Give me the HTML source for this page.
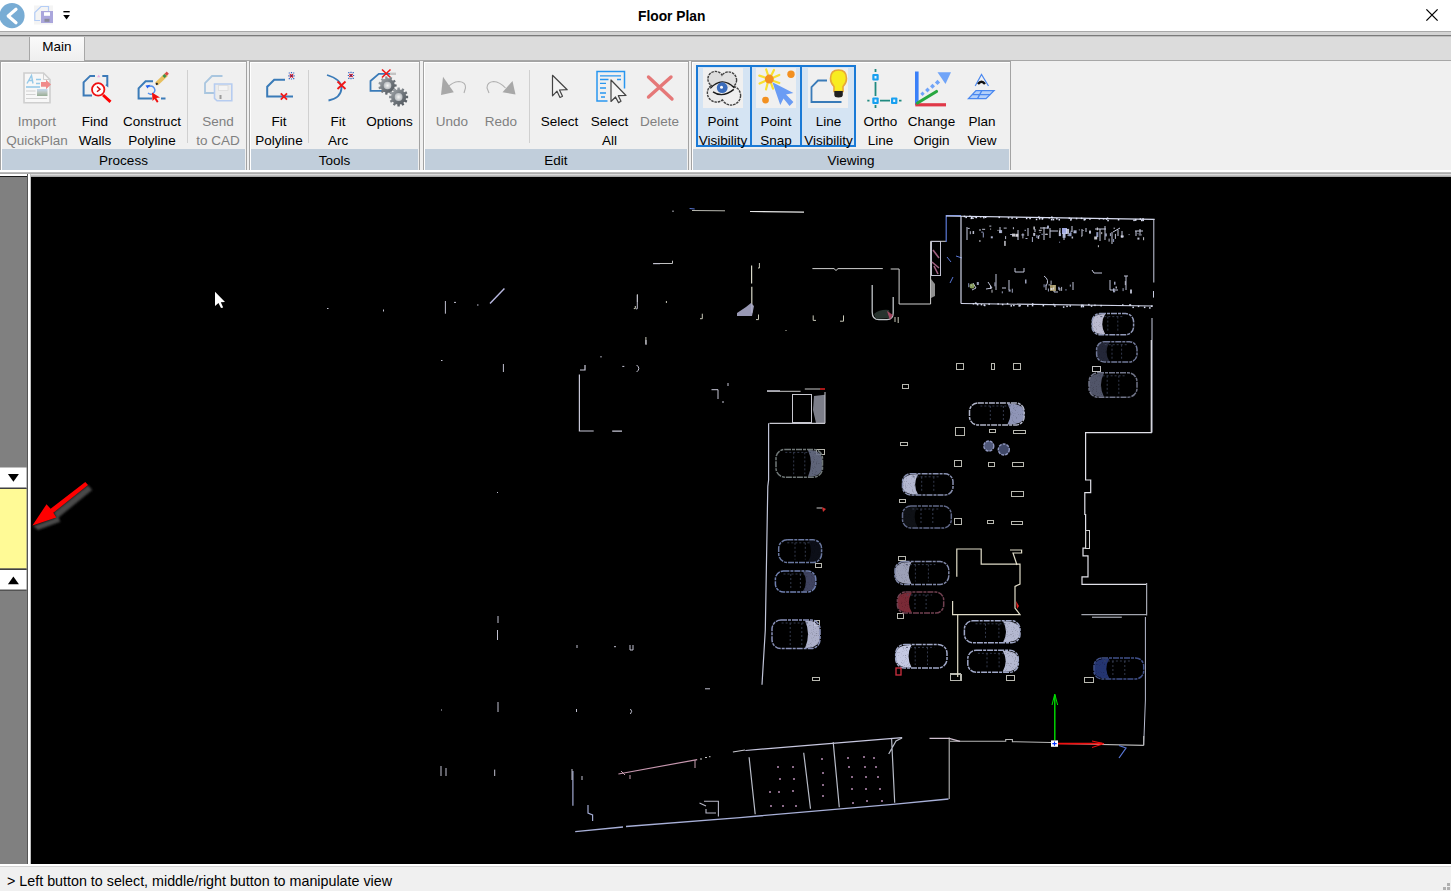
<!DOCTYPE html>
<html><head><meta charset="utf-8">
<style>
*{margin:0;padding:0;box-sizing:border-box}
html,body{width:1451px;height:891px;overflow:hidden;background:#f0f0f0;font-family:"Liberation Sans",sans-serif;position:relative}
.abs{position:absolute}
#title{left:0;top:0;width:1451px;height:31px;background:#fff}
#ttl{left:638px;top:9px;font-weight:bold;font-size:13.8px;color:#000;white-space:nowrap}
#sep1{left:0;top:31px;width:1451px;height:6px;background:linear-gradient(#a9a9a9 0,#a9a9a9 1px,#d4d4d4 1px,#d4d4d4 4px,#7a7a7a 4px,#7a7a7a 5px,#bdbdbd 5px)}
#tabs{left:0;top:37px;width:1451px;height:24px;background:#dcdcdc;border-bottom:1px solid #a7a7a7}
#tabmain{left:29px;top:37px;width:56px;height:25px;background:linear-gradient(#fafafa,#eeeeee);border-left:1px solid #a7a7a7;border-right:1px solid #a7a7a7;font-size:13.5px;text-align:center;line-height:19px;color:#000}
#ribbon{left:0;top:61px;width:1451px;height:111px;background:#f0f0f0}
.grp{position:absolute;top:61px;height:110px;border:1px solid #a3a3a3;box-shadow:inset 1px 1px 0 #fff}
.band{position:absolute;left:1px;right:1px;bottom:0px;height:21px;background:#c1cedb;font-size:13.5px;text-align:center;line-height:24px;color:#000}
.l{position:absolute;width:120px;margin-left:-60px;text-align:center;font-size:13.5px;line-height:19px;white-space:nowrap;color:#000;top:112px}
.d{color:#808080}
.vsep{position:absolute;top:70px;width:1px;height:73px;background:#d0d0d0}
.hl{position:absolute;top:66px;height:80px;background:#d5e4f3;border:1px solid #1a7ad6}
.hlo{position:absolute;top:65px;left:696px;width:160px;height:82px;border:1px solid #1a7ad6}
#sep2{left:0;top:170px;width:1451px;height:7px;background:linear-gradient(#fff 0,#fff 2px,#c4c4c4 2px,#a4a4a4 4px,#e8e8e8 4px,#9a9a9a 7px)}
#leftp{left:0;top:174px;width:28px;height:690px;background:linear-gradient(#fff 0,#fff 2px,#1a1a1a 2px,#1a1a1a 3px,#808080 3px);border-right:1px solid #555}
#vp{left:31px;top:177px;width:1420px;height:687px;background:#000}
#wline{left:28px;top:174px;width:3px;height:690px;background:linear-gradient(90deg,#fff,#fff 1.5px,#a0a0a0 3px)}
#status{left:0;top:864px;width:1451px;height:27px;background:#f0f0f0;font-size:14.3px;line-height:27px;padding-left:7px;color:#000;padding-top:4px;white-space:nowrap;background:linear-gradient(#fff 0,#fff 2px,#d4d4d4 2px,#d4d4d4 3px,#f0f0f0 3px)}
svg{position:absolute;left:0;top:0;overflow:visible}
</style></head><body>
<div id="title" class="abs"></div>
<div id="ttl" class="abs">Floor Plan</div>
<div id="sep1" class="abs"></div>
<div id="tabs" class="abs"></div>
<div id="tabmain" class="abs">Main</div>
<div id="ribbon" class="abs"></div>

<div class="grp" style="left:0;width:247px"><div class="band">Process</div></div>
<div class="grp" style="left:249px;width:171px"><div class="band">Tools</div></div>
<div class="grp" style="left:423px;width:266px"><div class="band">Edit</div></div>
<div class="grp" style="left:691px;width:320px"><div class="band">Viewing</div></div>

<div class="vsep" style="left:187px"></div>
<div class="vsep" style="left:308px"></div>
<div class="vsep" style="left:529px"></div>

<div class="hlo"></div>
<div class="hl" style="left:697px;width:54px"></div>
<div class="hl" style="left:751px;width:50px"></div>
<div class="hl" style="left:801px;width:54px"></div>

<div class="l d" style="left:37px">Import<br>QuickPlan</div>
<div class="l" style="left:95px">Find<br>Walls</div>
<div class="l" style="left:152px">Construct<br>Polyline</div>
<div class="l d" style="left:218px">Send<br>to CAD</div>
<div class="l" style="left:279px">Fit<br>Polyline</div>
<div class="l" style="left:338px">Fit<br>Arc</div>
<div class="l" style="left:389.5px">Options</div>
<div class="l d" style="left:452px">Undo</div>
<div class="l d" style="left:501px">Redo</div>
<div class="l" style="left:559.5px">Select</div>
<div class="l" style="left:609.5px">Select<br>All</div>
<div class="l d" style="left:659.5px">Delete</div>
<div class="l" style="left:723px">Point<br>Visibility</div>
<div class="l" style="left:776px">Point<br>Snap</div>
<div class="l" style="left:828.5px">Line<br>Visibility</div>
<div class="l" style="left:880.5px">Ortho<br>Line</div>
<div class="l" style="left:931.5px">Change<br>Origin</div>
<div class="l" style="left:982px">Plan<br>View</div>

<div id="sep2" class="abs"></div>
<div id="leftp" class="abs"></div>
<div id="wline" class="abs"></div>
<div id="vp" class="abs"></div>
<div id="status" class="abs">&gt; Left button to select, middle/right button to manipulate view</div>
<div class="abs" style="left:1447px;top:883px;width:3px;height:3px;background:#b0b0b0"></div><div class="abs" style="left:1443px;top:887px;width:3px;height:3px;background:#b0b0b0"></div><div class="abs" style="left:1447px;top:887px;width:3px;height:3px;background:#b0b0b0"></div>
<svg width="1451" height="180" viewBox="0 0 1451 180">
<!-- back button -->
<circle cx="12" cy="15.7" r="12.6" fill="#78acd4"/>
<path d="M16 9.2 L8.2 16 L16 22.8" fill="none" stroke="#fff" stroke-width="3.2" stroke-linecap="round" stroke-linejoin="round"/>
<!-- save -->
<rect x="34" y="5.5" width="19" height="19" fill="#f4f4f4"/>
<path d="M48.5 11 V6.5 H41 L34.8 12.5 V20.5 H40" fill="none" stroke="#b4cdf6" stroke-width="1.2"/>
<rect x="41" y="11" width="12" height="12" fill="#aaa6dc"/>
<rect x="44" y="12.2" width="6" height="3.6" fill="#fff"/>
<rect x="44.5" y="18.8" width="5" height="3" fill="#8a8a9a"/>
<!-- dropdown -->
<rect x="63.4" y="11" width="6.3" height="1.4" fill="#000"/>
<path d="M63.2 15 H69.9 L66.55 19.5 Z" fill="#000"/>
<!-- close -->
<path d="M1426.4 9.4 L1437.6 20.6 M1437.6 9.4 L1426.4 20.6" stroke="#000" stroke-width="1.3"/>

<!-- Import QuickPlan -->
<g opacity="0.75">
<path d="M24 73 H43.5 L50 79.5 V102.7 H24 Z" fill="#fafafa" stroke="#c4c4c4" stroke-width="1.6"/>
<path d="M43.5 73 V79.5 H50" fill="none" stroke="#c4c4c4" stroke-width="1"/>
<path d="M27 83.5 L31.5 75.5 L33 83.5 M28.5 80.5 H32.5" fill="none" stroke="#78bce6" stroke-width="1.4"/>
<path d="M36 79.5 H41 M36 83.5 H40" stroke="#78bce6" stroke-width="1.3"/>
<path d="M26 87 H40" stroke="#78bce6" stroke-width="1.6"/>
<path d="M41 82 H46 V79.8 L51 84.5 L46 89.3 V86.8 H41 Z" fill="#f06868"/>
<path d="M26 91 H35.5 M26 94.5 H35.5 M26 98.5 H47" stroke="#c8c8c8" stroke-width="1.2"/>
<defs><linearGradient id="pic" x1="0" y1="0" x2="0" y2="1"><stop offset="0" stop-color="#b8d0f0"/><stop offset="0.5" stop-color="#a8b8b0"/><stop offset="1" stop-color="#7a9878"/></linearGradient></defs><rect x="37" y="89" width="10.5" height="7" fill="url(#pic)"/>
</g>
<!-- Find Walls -->
<path d="M95 75.9 H90.2 L83.6 82.4 V95.6 H92" fill="none" stroke="#3c7ab8" stroke-width="2"/>
<path d="M102.3 75.9 H107.3 V85.5 L106 84.5" fill="none" stroke="#3c7ab8" stroke-width="2"/>
<path d="M97 77.3 L98.7 74.8 L100.4 77.3 Z" fill="#f0a8e0"/>
<circle cx="98.2" cy="89.4" r="6.2" fill="#fff" stroke="#f01010" stroke-width="1.8"/>
<path d="M97 86.5 L100 89.2 L97 91.8" fill="none" stroke="#d01010" stroke-width="1.5"/>
<path d="M103 95 L110.5 101.8" stroke="#f00" stroke-width="3"/>
<!-- Construct Polyline -->
<path d="M153 81.3 H145.6 L138.6 88.3 V98.5 H152" fill="none" stroke="#3a7bb8" stroke-width="2"/>
<path d="M161 98.5 H165.5" stroke="#3a7bb8" stroke-width="2"/>
<path d="M149 86.5 A4 4 0 1 1 148 93" fill="none" stroke="#5090f0" stroke-width="1.4"/>
<path d="M145.5 85.5 L150.5 84.8 L147.5 88.5 Z" fill="#2060f0"/>
<path d="M152 92.5 L152.5 101 L154.5 99 L157 102.7 L158.5 101.5 L156.3 98 L160 97.5 Z" fill="#f01010"/>
<path d="M156.5 84 L166.5 74.5" stroke="#e8c060" stroke-width="4"/>
<path d="M163.5 77 L165.5 75" stroke="#3a9050" stroke-width="3"/>
<path d="M165.7 74.8 L167.8 72.6" stroke="#d84848" stroke-width="3"/>
<path d="M156 84.6 L157.6 83.2" stroke="#202020" stroke-width="2"/>
<!-- Send to CAD -->
<g opacity="0.8">
<path d="M222.5 76 H212 L205 83 V93 H215" fill="none" stroke="#98bcdc" stroke-width="1.8"/>
<path d="M214.5 84 H231.8 V100.8 H217 L214.5 98.3 Z" fill="#ececec" stroke="#a8c4f0" stroke-width="1.6"/>
<rect x="218.5" y="85.5" width="9.5" height="5" fill="#f6f6f6" stroke="#d8d8d8" stroke-width="0.8"/>
<rect x="219.5" y="95" width="2" height="4" fill="#888"/>
</g>
<!-- Fit Polyline -->
<path d="M285 79.7 H274.2 L267.2 86.7 V96.6 H293" fill="none" stroke="#3a7bb8" stroke-width="2"/>
<path d="M280.8 93.3 L287 99.6 M287 93.3 L280.8 99.6" stroke="#f01818" stroke-width="1.8"/>
<path d="M288.7 73.0 h1.2 M290.9 72.6 h1.2 M293.1 73.0 h1.2 M288.3 75.8 h1.2 M293.5 75.8 h1.2 M288.7 78.6 h1.2 M290.9 79.0 h1.2 M293.1 78.6 h1.2" stroke="#3060c0" stroke-width="1.2"/>
<path d="M289.9 74.2 L293.1 77.39999999999999 M293.1 74.2 L289.9 77.39999999999999" stroke="#d82030" stroke-width="1.4"/>
<circle cx="291.5" cy="75.8" r="1" fill="#602060"/>
<!-- Fit Arc -->
<path d="M327 75 Q341 79 341.5 88 Q341 98 328.5 100.5" fill="none" stroke="#3a7bb8" stroke-width="1.8"/>
<path d="M337.5 81.5 L345.5 89 M345.5 81.5 L337.5 89" stroke="#f01818" stroke-width="1.8"/>
<path d="M348.2 72.7 h1.2 M350.4 72.3 h1.2 M352.6 72.7 h1.2 M347.8 75.5 h1.2 M353 75.5 h1.2 M348.2 78.3 h1.2 M350.4 78.7 h1.2 M352.6 78.3 h1.2" stroke="#3060c0" stroke-width="1.2"/>
<path d="M349.4 73.9 L352.6 77.1 M352.6 73.9 L349.4 77.1" stroke="#d82030" stroke-width="1.4"/>
<circle cx="351" cy="75.5" r="1" fill="#602060"/>
<!-- Options -->
<path d="M391 73.8 H378.8 L370.5 81 V90.8 H386" fill="none" stroke="#3a7bb8" stroke-width="1.8"/>
<path d="M390 73.8 H396" stroke="#c4c4c4" stroke-width="2.4"/>
<path d="M382 69.5 L390.5 77.5 M390.5 69.5 L382 77.5" stroke="#f01818" stroke-width="1.6"/>
<defs><linearGradient id="gg" x1="0" y1="0" x2="1" y2="1"><stop offset="0" stop-color="#b0b4b8"/><stop offset="0.5" stop-color="#70767c"/><stop offset="1" stop-color="#4a5056"/></linearGradient>
<radialGradient id="gh"><stop offset="0" stop-color="#f4f4f4"/><stop offset="1" stop-color="#b8bcc0"/></radialGradient></defs>
<path d="M394.60 84.28 L396.63 84.40 L396.63 86.60 L394.60 86.72 L394.41 87.53 L394.13 88.31 L395.78 89.51 L394.59 91.36 L392.81 90.36 L392.21 90.94 L391.56 91.45 L392.30 93.35 L390.29 94.27 L389.34 92.46 L388.52 92.63 L387.70 92.70 L387.29 94.70 L385.11 94.38 L385.28 92.35 L384.51 92.05 L383.77 91.66 L382.35 93.12 L380.69 91.68 L381.93 90.07 L381.44 89.39 L381.03 88.67 L379.05 89.13 L378.43 87.02 L380.35 86.33 L380.30 85.50 L380.35 84.67 L378.43 83.98 L379.05 81.87 L381.03 82.33 L381.44 81.61 L381.93 80.93 L380.69 79.32 L382.35 77.88 L383.77 79.34 L384.51 78.95 L385.28 78.65 L385.11 76.62 L387.29 76.30 L387.70 78.30 L388.52 78.37 L389.34 78.54 L390.29 76.73 L392.30 77.65 L391.56 79.55 L392.21 80.06 L392.81 80.64 L394.59 79.64 L395.78 81.49 L394.13 82.69 L394.41 83.47 Z" fill="url(#gg)"/>
<circle cx="387.5" cy="85.5" r="3.8" fill="url(#gh)"/>
<path d="M405.99 95.73 L408.13 95.85 L408.13 98.15 L405.99 98.27 L405.84 98.94 L405.64 99.60 L407.43 100.77 L406.28 102.76 L404.37 101.79 L403.90 102.30 L403.39 102.77 L404.36 104.68 L402.37 105.83 L401.20 104.04 L400.54 104.24 L399.87 104.39 L399.75 106.53 L397.45 106.53 L397.33 104.39 L396.66 104.24 L396.00 104.04 L394.83 105.83 L392.84 104.68 L393.81 102.77 L393.30 102.30 L392.83 101.79 L390.92 102.76 L389.77 100.77 L391.56 99.60 L391.36 98.94 L391.21 98.27 L389.07 98.15 L389.07 95.85 L391.21 95.73 L391.36 95.06 L391.56 94.40 L389.77 93.23 L390.92 91.24 L392.83 92.21 L393.30 91.70 L393.81 91.23 L392.84 89.32 L394.83 88.17 L396.00 89.96 L396.66 89.76 L397.33 89.61 L397.45 87.47 L399.75 87.47 L399.87 89.61 L400.54 89.76 L401.20 89.96 L402.37 88.17 L404.36 89.32 L403.39 91.23 L403.90 91.70 L404.37 92.21 L406.28 91.24 L407.43 93.23 L405.64 94.40 L405.84 95.06 Z" fill="url(#gg)"/>
<circle cx="398.6" cy="97" r="3.9" fill="url(#gh)"/>
<!-- Undo -->
<path d="M447 88 Q452 82 459 81.5 Q466 82 465.5 88 L464 93" fill="none" stroke="#b0b0b0" stroke-width="1.1"/>
<path d="M443 76.8 L441 95 L453.8 92.3 Z" fill="#a8a8a8"/>
<!-- Redo -->
<path d="M505.5 88 Q500 82 493.5 81.5 Q487 82 487 88 L489 93" fill="none" stroke="#b0b0b0" stroke-width="1.1"/>
<path d="M512.5 81 L515.5 94.5 L502.5 92.3 Z" fill="#a8a8a8"/>
<!-- Select -->
<path d="M552.5 75.3 V95.8 L557 91.2 L560 97.5 L562.5 96.2 L559.5 90 L567.2 89.7 Z" fill="#f4f4f4" stroke="#444" stroke-width="1.2" stroke-linejoin="round"/>
<!-- Select All -->
<path d="M607.5 101 H597 V71.6 H624.5 V88.5" fill="none" stroke="#2896f0" stroke-width="1.5"/>
<path d="M600 75.8 H621 M600 79.5 H608.5 M617 79.5 H621 M600 83.3 H606 M600 88 H606 M600 93 H606 M601 97 H605" stroke="#2896f0" stroke-width="1.3"/>
<path d="M611 80 V101.5 L615.5 97 L618.5 102.6 L621 101.3 L618.3 95.7 L626 95.5 Z" fill="#f4f4f4" stroke="#444" stroke-width="1.2" stroke-linejoin="round"/>
<!-- Delete -->
<path d="M648.5 77 L672 99 M671 77 L648.5 97" stroke="#e57878" stroke-width="3.4" stroke-linecap="round"/>
<!-- Point Visibility -->
<rect x="703" y="68" width="40" height="40" fill="#f0f0f0"/>
<g stroke="#404040" stroke-width="2.6" stroke-dasharray="2.4 0.8">
<circle cx="715.5" cy="79" r="7" fill="#dcdcdc"/>
<circle cx="728.5" cy="80" r="7.5" fill="#e0e0e0"/>
<circle cx="716.5" cy="93" r="8.5" fill="#ececec"/>
<circle cx="731" cy="95.5" r="9" fill="#eeeeee"/>
</g>
<circle cx="715.5" cy="79" r="7" fill="#dcdcdc"/>
<circle cx="728.5" cy="80" r="7.5" fill="#e0e0e0"/>
<circle cx="716.5" cy="93" r="8.5" fill="#eaeaea"/>
<circle cx="731" cy="95.5" r="9" fill="#efefef"/>
<path d="M710.3 88.4 Q722 75.5 734.5 88" fill="none" stroke="#1a1a1a" stroke-width="1.4"/>
<path d="M713 91.8 Q722.7 98.5 733.8 89.4" fill="none" stroke="#1a1a1a" stroke-width="1.4"/>
<circle cx="722.2" cy="87.7" r="5.4" fill="#3a6cbc"/>
<circle cx="721.5" cy="87.3" r="1.5" fill="#fff"/>
<!-- Point Snap -->
<rect x="756" y="68" width="40" height="40" fill="#f0f0f0"/>
<path d="M766.2 69.5 L768 75 M774 70 L771.5 75 M779.3 75 L773.5 77.5 M779.3 83 L773.5 81 M773 88.7 L771 83 M766 89.4 L767.5 83.5 M759.6 83.6 L765 81 M759.3 75.6 L765 77.5" stroke="#f8e030" stroke-width="2.2" stroke-linecap="round"/>
<circle cx="769.3" cy="79.1" r="4.5" fill="#f39020"/>
<circle cx="791" cy="74.3" r="3.7" fill="#f39020"/>
<circle cx="765.5" cy="100.1" r="3.4" fill="#f39020"/>
<path d="M772.4 82.2 L793.4 92.9 L786 94.5 L793.4 102 L789.6 106 L783.5 98.5 L780.3 105 Z" fill="#6a9cf4"/>
<!-- Line Visibility -->
<rect x="808" y="68" width="40" height="40" fill="#f0f0f0"/>
<path d="M827 80.5 H818 L811.5 87 V102 H841.5" fill="none" stroke="#3a7bb8" stroke-width="1.8"/>
<path d="M838.5 70 Q830.5 70 830.5 78.5 Q830.5 83 834 86.5 V91.5 H843 V86.5 Q846.5 83 846.5 78.5 Q846.5 70 838.5 70 Z" fill="#f8ec20" stroke="#e8a838" stroke-width="1.6"/>
<path d="M834.3 91 H842.8 V95 Q842.8 97.5 838.5 97.5 Q834.3 97.5 834.3 95 Z" fill="#202020"/>
<!-- Ortho Line -->
<path d="M875.5 69 V72 M875.5 82 V96 M875.5 105 V108 M867.3 100.7 H869.5 M880 100.7 H890 M899 100.7 H901.5" stroke="#208a80" stroke-width="1.8"/>
<rect x="872.3" y="74" width="6.4" height="6.4" rx="1" fill="#18a0f0"/>
<rect x="872.3" y="97.5" width="6.4" height="6.4" rx="1" fill="#18a0f0"/>
<rect x="891" y="97.5" width="6.4" height="6.4" rx="1" fill="#18a0f0"/>
<rect x="874.5" y="76" width="2" height="2.5" fill="#e8f4ff"/>
<rect x="874.5" y="99.5" width="2" height="2.5" fill="#e8f4ff"/>
<rect x="893.2" y="99.5" width="2" height="2.5" fill="#e8f4ff"/>
<!-- Change Origin -->
<rect x="915" y="71.5" width="3.6" height="33.5" fill="#3a80f8"/>
<rect x="915.3" y="103.2" width="30.7" height="3.2" fill="#e03848"/>
<path d="M917.5 103 L936.5 91.5" stroke="#28a840" stroke-width="3.2" stroke-linecap="round"/>
<path d="M922.5 91.5 l2.2 2.2 l-2.2 2.2 l-2.2 -2.2 Z M927.5 87.6 l2.4 2.4 l-2.4 2.4 l-2.4 -2.4 Z M932.5 83.8 l2.5 2.5 l-2.5 2.5 l-2.5 -2.5 Z M937.5 79.8 l2.6 2.6 l-2.6 2.6 l-2.6 -2.6 Z" fill="#70a4f8"/>
<path d="M937.5 72.3 H951 L945.5 84 Z" fill="#70a4f8"/>
<!-- Plan View -->
<path d="M975.2 86 L981.5 74.5 L988.5 86" fill="none" stroke="#4a88f0" stroke-width="1.2"/>
<path d="M978 84 Q981.5 79.5 985 84" fill="none" stroke="#101010" stroke-width="2.4"/>
<path d="M976 90.6 H994 L986 98.6 H968.5 Z" fill="#b4d0fa" stroke="#4a88f0" stroke-width="1.3"/>
<path d="M981.8 90.6 L977.5 98.6 M972.5 94.6 H990.2" stroke="#4a88f0" stroke-width="1.3"/>
</svg>
<svg width="1451" height="891" viewBox="0 0 1451 891" style="position:absolute;left:0;top:0">
<rect x="0" y="467.5" width="26.5" height="20.5" fill="#fff"/>
<path d="M7.9 474 H18.9 L13.4 481.8 Z" fill="#000"/>
<rect x="0" y="487.5" width="26.5" height="1.5" fill="#404040"/>
<rect x="0" y="489" width="26.5" height="79.5" fill="#fffa96"/>
<rect x="0" y="568.5" width="26.5" height="1.5" fill="#404040"/>
<rect x="0" y="570" width="26.5" height="19.7" fill="#fff"/>
<path d="M7.9 584.2 H18.9 L13.4 576.4 Z" fill="#000"/>
<rect x="0" y="589.7" width="26.5" height="1" fill="#404040"/>
<defs><filter id="blur1" x="-20%" y="-20%" width="140%" height="140%"><feGaussianBlur stdDeviation="0.9"/></filter>
<filter id="grain" x="0" y="0" width="100%" height="100%"><feTurbulence type="fractalNoise" baseFrequency="0.9" numOctaves="1" seed="4" result="n"/><feColorMatrix in="n" type="matrix" values="0 0 0 0 0  0 0 0 0 0  0 0 0 0 0  0 0 0 -0.9 1.5" result="m"/><feComposite in="SourceGraphic" in2="m" operator="in"/></filter></defs>
<path d="M33 526 L56.3 517.4 L53.3 512.7 L88 485.1 L92.2 490 L58.5 517.5 L60.3 521.8 L38 530 Z" fill="#4a4a4a" filter="url(#blur1)"/>
<path d="M32.4 525.5 L46.5 504.3 L50.6 508.7 L85.3 482.1 L88 485.1 L53.3 512.7 L56.3 517.4 Z" fill="#ff0000"/>
<path d="M215 291.7 V306 L218.5 303 L221 308 L223.2 307.4 L220.8 302.3 L225 302 Z" fill="#fff"/>
<path d="M689.6 208.5 L694.7 209" stroke="#5a78d8" stroke-width="1.0" fill="none" opacity="1.0"/>
<path d="M692 210.5 L725 210.8" stroke="#b8b8b0" stroke-width="1.0" fill="none" opacity="1.0"/>
<path d="M750 211.5 L804 212.2" stroke="#e8e8e8" stroke-width="1.2" fill="none" opacity="1.0"/>
<path d="M673 210.5 V212" stroke="#cfd0dc" stroke-width="1.0" fill="none" opacity="1.0"/>
<path d="M653.4 263.5 H672.5 V260.7" stroke="#c0c0c0" stroke-width="1.0" fill="none" opacity="1.0"/>
<path d="M751.6 265.4 V283.4 M751.8 286.8 V312.8" stroke="#d8d8c8" stroke-width="1.2" fill="none" opacity="1.0"/>
<path d="M737 313 L746 307 L751 303 L754 306 L752 316 L737 316 Z" fill="#a8a8c8" opacity="0.9"/>
<path d="M637.4 294.3 V302" stroke="#c8c8b8" stroke-width="1.0" fill="none" opacity="1.0"/>
<path d="M635.3 306 V308.6 H633.8" stroke="#c8c8b8" stroke-width="1.0" fill="none" opacity="1.0"/>
<path d="M702.3 313.7 V318.7 H700" stroke="#c8c8b8" stroke-width="1.0" fill="none" opacity="1.0"/>
<path d="M758.5 314.5 V319.6 H756" stroke="#c8c8b8" stroke-width="1.0" fill="none" opacity="1.0"/>
<path d="M759.4 263 V268 H758" stroke="#c8c8b8" stroke-width="1.0" fill="none" opacity="1.0"/>
<path d="M813.2 315.4 V320.4 H816" stroke="#c8c8b8" stroke-width="1.0" fill="none" opacity="1.0"/>
<path d="M843.5 315.4 V321.2 H840" stroke="#c8c8b8" stroke-width="1.0" fill="none" opacity="1.0"/>
<path d="M898.2 317 V323 M895 317 V322" stroke="#c8c8b8" stroke-width="1.0" fill="none" opacity="1.0"/>
<path d="M645.9 337 V344" stroke="#c8c8b8" stroke-width="1.0" fill="none" opacity="1.0"/>
<path d="M666.4 301 V303" stroke="#c8c8b8" stroke-width="1.0" fill="none" opacity="1.0"/>
<path d="M785.5 330.5 h1" stroke="#c8c8b8" stroke-width="1.0" fill="none" opacity="1.0"/>
<path d="M812.4 268.6 H834 L836 270.5 L838 268.6 H882.8 M890.7 269 H899.1 V304 H930.6 V241.3 H946" stroke="#d0d0d0" stroke-width="1.0" fill="none" opacity="1.0"/>
<rect x="931.5" y="241.5" width="9.0" height="34.0" stroke="#c0c0d0" stroke-width="1.0" fill="none"/>
<path d="M933 250 L939 258 M932 262 L939 268 M934 266 L938 274" stroke="#a06080" stroke-width="1.6"/>
<path d="M931 279 L935 284 L935 296 L931 298 Z" fill="#909090"/>
<path d="M946.2 242 V215.6 H961" stroke="#5a78d8" stroke-width="1.2" fill="none" opacity="1.0"/>
<path d="M947 257 L951 262 M956 256 L962 258 M950 283 L953 277" stroke="#5a78d8" stroke-width="1.0" fill="none" opacity="1.0"/>
<path d="M872.2 285 V312 Q872.2 319.6 879 319.6 H887 Q893.2 319.6 893.2 313 V297" stroke="#c0c4c8" stroke-width="1.3" fill="none" opacity="1.0"/>
<path d="M874 314 Q880 309 889 310 L891 318 L876 319 Z" fill="#2c3a34" opacity="0.9"/>
<path d="M887 311 L893 315 L890 320 Z" fill="#c05070" opacity="0.8"/>
<path d="M946 216 L1154.6 219.4" stroke="#d8dcf0" stroke-width="1.2" fill="none" opacity="1.0"/>
<path d="M1153.8 219 V282.5 M1153.5 291 V297.6 M1152 318 V432.6" stroke="#c8cce0" stroke-width="1.0" fill="none" opacity="1.0"/>
<path d="M961 216 V303.5" stroke="#d0d4e8" stroke-width="1.2" fill="none" opacity="1.0"/>
<path d="M961 303.5 L1153 306" stroke="#d0d4e8" stroke-width="1.2" fill="none" opacity="1.0"/>
<path d="M967 227 V240" stroke="#c8cce0" stroke-width="1.0" fill="none" opacity="1.0"/>
<path d="M980 229 V231" stroke="#c8cce0" stroke-width="1.0" fill="none" opacity="1.0"/>
<path d="M1000 227 V233" stroke="#c8cce0" stroke-width="1.0" fill="none" opacity="1.0"/>
<path d="M1018 230 V240" stroke="#c8cce0" stroke-width="1.0" fill="none" opacity="1.0"/>
<path d="M1028 228 V236" stroke="#c8cce0" stroke-width="1.0" fill="none" opacity="1.0"/>
<path d="M1035 229 V232" stroke="#c8cce0" stroke-width="1.0" fill="none" opacity="1.0"/>
<path d="M1044 227 V240" stroke="#c8cce0" stroke-width="1.0" fill="none" opacity="1.0"/>
<path d="M1050 228 V238" stroke="#c8cce0" stroke-width="1.0" fill="none" opacity="1.0"/>
<path d="M1060 228 V236" stroke="#c8cce0" stroke-width="1.0" fill="none" opacity="1.0"/>
<path d="M1064 231 V240" stroke="#c8cce0" stroke-width="1.0" fill="none" opacity="1.0"/>
<path d="M1072 226 V232" stroke="#c8cce0" stroke-width="1.0" fill="none" opacity="1.0"/>
<path d="M1082 229 V236" stroke="#c8cce0" stroke-width="1.0" fill="none" opacity="1.0"/>
<path d="M1086 228 V232" stroke="#c8cce0" stroke-width="1.0" fill="none" opacity="1.0"/>
<path d="M1100 229 V241" stroke="#c8cce0" stroke-width="1.0" fill="none" opacity="1.0"/>
<path d="M1105 226 V240" stroke="#c8cce0" stroke-width="1.0" fill="none" opacity="1.0"/>
<path d="M1112 232 V244" stroke="#c8cce0" stroke-width="1.0" fill="none" opacity="1.0"/>
<path d="M1118 230 V236" stroke="#c8cce0" stroke-width="1.0" fill="none" opacity="1.0"/>
<path d="M1122 231 V238" stroke="#c8cce0" stroke-width="1.0" fill="none" opacity="1.0"/>
<path d="M1136 231 V236" stroke="#c8cce0" stroke-width="1.0" fill="none" opacity="1.0"/>
<path d="M1140 229 V234" stroke="#c8cce0" stroke-width="1.0" fill="none" opacity="1.0"/>
<path d="M1050 231 H1058 M1040 228 H1048 M1095 229 H1106 M1113 232 L1120 228 M1135 231 H1143" stroke="#c8cce0" stroke-width="1.0" fill="none" opacity="1.0"/>
<rect x="1062" y="228" width="5" height="6" fill="#a0a8e0"/>
<path d="M1015 268 V272 H1024 V268" stroke="#c0c4d8" stroke-width="1.0" fill="none" opacity="1.0"/>
<path d="M1092 270 L1094 273 H1102" stroke="#c0c4d8" stroke-width="1.0" fill="none" opacity="1.0"/>
<path d="M973 283 L976 288 L972 290" stroke="#c0c4d8" stroke-width="1.0" fill="none" opacity="1.0"/>
<path d="M988 282 L992 288 L986 289 M996 274 V290 M1002 288 H1006 M1009 280 V290" stroke="#c0c4d8" stroke-width="1.0" fill="none" opacity="1.0"/>
<path d="M1044 276 Q1050 280 1046 286 L1046 290" stroke="#c0c4d8" stroke-width="1.0" fill="none" opacity="1.0"/>
<path d="M1054 285 V292 H1058" stroke="#c0c4d8" stroke-width="1.0" fill="none" opacity="1.0"/>
<path d="M1073 282 V290" stroke="#c0c4d8" stroke-width="1.0" fill="none" opacity="1.0"/>
<path d="M1110 280 V290 H1118 M1124 276 H1128 M1126 276 V290" stroke="#c0c4d8" stroke-width="1.0" fill="none" opacity="1.0"/>
<rect x="1050" y="285" width="6" height="6" fill="#c8b880" opacity="0.8"/>
<circle cx="972" cy="286" r="2.5" fill="#a8c070" opacity="0.8"/>
<path d="M1105.232 314.1 Q1091 313.6 1092 324.15 Q1091 334.7 1105.232 334.2 Q1099.232 324.15 1105.232 314.1 Z" fill="#d0d0e8" opacity="0.9" filter="url(#grain)"/>
<rect x="1092" y="313.6" width="41.59999999999991" height="21.099999999999966" rx="8.0" ry="8.0" stroke="#9098b8" stroke-width="1.5" stroke-dasharray="6 1 3 1" fill="none" opacity="1"/>
<path d="M1107.8 316.6 V331.7 M1117.8 316.6 V331.7 M1100.3 316.6 H1123.2" stroke="#404860" stroke-width="0.8" stroke-dasharray="2 2" fill="none"/>
<path d="M1109.508 342.2 Q1095.6 341.7 1096.6 351.85 Q1095.6 362 1109.508 361.5 Q1103.508 351.85 1109.508 342.2 Z" fill="#4a5070" opacity="0.5" filter="url(#grain)"/>
<rect x="1096.6" y="341.7" width="40.40000000000009" height="20.30000000000001" rx="7.7" ry="7.7" stroke="#707898" stroke-width="1.5" stroke-dasharray="6 1 3 1" fill="none" opacity="1"/>
<path d="M1112.0 344.7 V359 M1121.6 344.7 V359 M1104.7 344.7 H1126.9" stroke="#404860" stroke-width="0.8" stroke-dasharray="2 2" fill="none"/>
<rect x="1092.5" y="366.5" width="8.0" height="5.0" stroke="#c0c0c0" stroke-width="1.0" fill="none"/>
<path d="M1103.96 373.3 Q1088 372.8 1089 385.0 Q1088 397.2 1103.96 396.7 Q1097.96 385.0 1103.96 373.3 Z" fill="#5a5e74" opacity="0.9" filter="url(#grain)"/>
<rect x="1089" y="372.8" width="48" height="24.399999999999977" rx="9.0" ry="9.0" stroke="#707488" stroke-width="1.5" stroke-dasharray="6 1 3 1" fill="none" opacity="1"/>
<path d="M1107.2 375.8 V394.2 M1118.8 375.8 V394.2 M1098.6 375.8 H1125.0" stroke="#404860" stroke-width="0.8" stroke-dasharray="2 2" fill="none"/>
<path d="M1151.3 340 V432.6 H1085.6 V480 H1090.7 V492.6 H1084.8 V514.5 H1085.6 V548.2 H1083 V555.8 H1088 V576.8 H1082 V584.4 H1146.2" stroke="#e0e0e8" stroke-width="1.2" fill="none" opacity="1.0"/>
<rect x="1085.5" y="530.5" width="4.0" height="18.0" stroke="#d0d0d0" stroke-width="1.0" fill="none"/>
<path d="M1146.7 583 V615.5 M1081.4 614.7 H1146.2 M1092 617.2 H1121.8" stroke="#c8ccd8" stroke-width="1.0" fill="none" opacity="1.0"/>
<path d="M1145.4 617 V700 L1143.7 745.4" stroke="#b8bcd0" stroke-width="1.0" fill="none" opacity="1.0"/>
<rect x="956.5" y="363.5" width="7.0" height="6.0" stroke="#b8b8b0" stroke-width="1.0" fill="none"/>
<rect x="991.5" y="363.5" width="3.0" height="6.0" stroke="#b8b8b0" stroke-width="1.0" fill="none"/>
<rect x="1013.5" y="363.5" width="7.0" height="6.0" stroke="#b8b8b0" stroke-width="1.0" fill="none"/>
<rect x="902.5" y="384.5" width="6.0" height="4.0" stroke="#b8b8b0" stroke-width="1.0" fill="none"/>
<rect x="955.5" y="427.5" width="9.0" height="8.0" stroke="#b8b8b0" stroke-width="1.0" fill="none"/>
<rect x="989.5" y="429.5" width="6.0" height="3.0" stroke="#b8b8b0" stroke-width="1.0" fill="none"/>
<rect x="1013.5" y="430.5" width="12.0" height="3.0" stroke="#b8b8b0" stroke-width="1.0" fill="none"/>
<rect x="900.5" y="442.5" width="7.0" height="3.0" stroke="#b8b8b0" stroke-width="1.0" fill="none"/>
<rect x="954.5" y="460.5" width="7.0" height="6.0" stroke="#b8b8b0" stroke-width="1.0" fill="none"/>
<rect x="988.5" y="462.5" width="6.0" height="4.0" stroke="#b8b8b0" stroke-width="1.0" fill="none"/>
<rect x="1012.5" y="462.5" width="11.0" height="4.0" stroke="#b8b8b0" stroke-width="1.0" fill="none"/>
<rect x="1011.5" y="491.5" width="12.0" height="5.0" stroke="#b8b8b0" stroke-width="1.0" fill="none"/>
<rect x="954.5" y="518.5" width="7.0" height="6.0" stroke="#b8b8b0" stroke-width="1.0" fill="none"/>
<rect x="987.5" y="520.5" width="6.0" height="3.0" stroke="#b8b8b0" stroke-width="1.0" fill="none"/>
<rect x="1011.5" y="521.5" width="11.0" height="3.0" stroke="#b8b8b0" stroke-width="1.0" fill="none"/>
<rect x="899.5" y="499.5" width="6.0" height="3.0" stroke="#b8b8b0" stroke-width="1.0" fill="none"/>
<rect x="898.5" y="556.5" width="7.0" height="4.0" stroke="#b8b8b0" stroke-width="1.0" fill="none"/>
<rect x="897.5" y="613.5" width="6.0" height="5.0" stroke="#b8b8b0" stroke-width="1.0" fill="none"/>
<rect x="816.5" y="449.5" width="8.0" height="5.0" stroke="#b8b8b0" stroke-width="1.0" fill="none"/>
<rect x="815.5" y="563.5" width="6.0" height="4.0" stroke="#b8b8b0" stroke-width="1.0" fill="none"/>
<rect x="814.5" y="620.5" width="5.0" height="5.0" stroke="#b8b8b0" stroke-width="1.0" fill="none"/>
<rect x="812.5" y="677.5" width="7.0" height="3.0" stroke="#b8b8b0" stroke-width="1.0" fill="none"/>
<rect x="950.5" y="673.5" width="10.0" height="7.0" stroke="#b8b8b0" stroke-width="1.0" fill="none"/>
<rect x="950.5" y="674.5" width="11.0" height="6.0" stroke="#b8b8b0" stroke-width="1.0" fill="none"/>
<rect x="1006.5" y="675.5" width="8.0" height="5.0" stroke="#b8b8b0" stroke-width="1.0" fill="none"/>
<rect x="1084.5" y="677.5" width="9.0" height="5.0" stroke="#b8b8b0" stroke-width="1.0" fill="none"/>
<path d="M1007.431 403.5 Q1025.2 403 1024.2 414.0 Q1025.2 425 1007.431 424.5 Q1013.431 414.0 1007.431 403.5 Z" fill="#a8b0d8" opacity="0.85" filter="url(#grain)"/>
<rect x="969.5" y="403" width="54.700000000000045" height="22" rx="8.4" ry="8.4" stroke="#b0b4c8" stroke-width="1.5" stroke-dasharray="6 1 3 1" fill="none" opacity="1"/>
<path d="M990.3 406 V422 M1003.4 406 V422 M980.4 406 H1010.5" stroke="#404860" stroke-width="0.8" stroke-dasharray="2 2" fill="none"/>
<circle cx="988.8" cy="446" r="5" fill="#505878" stroke="#9098c0" stroke-width="1.4" stroke-dasharray="3 1"/><circle cx="1003.8" cy="449.5" r="5.5" fill="#404868" stroke="#9098c0" stroke-width="1.4" stroke-dasharray="3 1"/>
<path d="M767 391.3 H800.6" stroke="#c8c8c8" stroke-width="1.0" fill="none" opacity="1.0"/>
<path d="M804.8 389 H820" stroke="#c8c8c8" stroke-width="1.0" fill="none" opacity="1.0"/>
<path d="M820 389 H825" stroke="#e02020" stroke-width="1.5" fill="none" opacity="1.0"/>
<rect x="792.5" y="394.5" width="19.0" height="28.0" stroke="#c8c8d0" stroke-width="1.0" fill="none"/>
<path d="M814 396 L825 394.7 L825 423.3 L816 423 L813 410 Z" fill="#8a8c98" opacity="0.9"/>
<path d="M769.5 423.3 H825" stroke="#c8c8d0" stroke-width="1.2" fill="none" opacity="1.0"/>
<path d="M825 392 V423.3" stroke="#c8c8d0" stroke-width="1.0" fill="none" opacity="1.0"/>
<path d="M768.6 423.3 V480 L767.8 486.4 L765.3 630 L762 684.8" stroke="#c0c4d8" stroke-width="1.2" fill="none" opacity="1.0"/>
<path d="M807.945 449.9 Q823.5 449.4 822.5 463.29999999999995 Q823.5 477.2 807.945 476.7 Q813.945 463.29999999999995 807.945 449.9 Z" fill="#6a7088" opacity="0.9" filter="url(#grain)"/>
<rect x="776" y="449.4" width="46.5" height="27.80000000000001" rx="9.0" ry="9.0" stroke="#707878" stroke-width="1.5" stroke-dasharray="6 1 3 1" fill="none" opacity="1"/>
<path d="M793.7 452.4 V474.2 M804.8 452.4 V474.2 M785.3 452.4 H810.9" stroke="#404860" stroke-width="0.8" stroke-dasharray="2 2" fill="none"/>
<path d="M579.4 374.5 V431 H593.7 M612.2 431.2 H622 M580 370 H585 V365" stroke="#c8c8d8" stroke-width="1.2" fill="none" opacity="1.0"/>
<path d="M636.6 365 Q641 368.5 636.6 372 M601 356 v1.5 M622.3 366.4 h2 M646 340 v5" stroke="#c8c8d8" stroke-width="1.0" fill="none" opacity="1.0"/>
<path d="M711.5 389.7 H718 V399 M767 390.8 H780 M728 383 v3 M722 402 h2" stroke="#c8c8d8" stroke-width="1.0" fill="none" opacity="1.0"/>
<path d="M816.6 508 H822" stroke="#c8c8c8" stroke-width="1.0" fill="none" opacity="1.0"/>
<path d="M822 507 L826 509 L823 512 Z" fill="#d03030"/>
<path d="M808.017 540.3 Q822.6 539.8 821.6 551.15 Q822.6 562.5 808.017 562.0 Q814.017 551.15 808.017 540.3 Z" fill="#2a3050" opacity="0.3" filter="url(#grain)"/>
<rect x="778.7" y="539.8" width="42.89999999999998" height="22.700000000000045" rx="8.6" ry="8.6" stroke="#6a78a0" stroke-width="1.5" stroke-dasharray="6 1 3 1" fill="none" opacity="1"/>
<path d="M795.0 542.8 V559.5 M805.3 542.8 V559.5 M787.3 542.8 H810.9" stroke="#404860" stroke-width="0.8" stroke-dasharray="2 2" fill="none"/>
<path d="M802.8919999999999 571.5 Q816.8 571 815.8 581.5 Q816.8 592 802.8919999999999 591.5 Q808.8919999999999 581.5 802.8919999999999 571.5 Z" fill="#6a70a0" opacity="0.6" filter="url(#grain)"/>
<rect x="775.4" y="571" width="40.39999999999998" height="21" rx="8.0" ry="8.0" stroke="#7080b0" stroke-width="1.5" stroke-dasharray="6 1 3 1" fill="none" opacity="1"/>
<path d="M790.8 574 V589 M800.4 574 V589 M783.5 574 H805.7" stroke="#404860" stroke-width="0.8" stroke-dasharray="2 2" fill="none"/>
<path d="M805.04 620.5 Q821 620 820 634.3 Q821 648.6 805.04 648.1 Q811.04 634.3 805.04 620.5 Z" fill="#c0c4e0" opacity="0.9" filter="url(#grain)"/>
<rect x="772" y="620" width="48" height="28.600000000000023" rx="9.0" ry="9.0" stroke="#8890b8" stroke-width="1.5" stroke-dasharray="6 1 3 1" fill="none" opacity="1"/>
<path d="M790.2 623 V645.6 M801.8 623 V645.6 M781.6 623 H808.0" stroke="#404860" stroke-width="0.8" stroke-dasharray="2 2" fill="none"/>
<path d="M918.135 474.3 Q901.5 473.8 902.5 484.4 Q901.5 495 918.135 494.5 Q912.135 484.4 918.135 474.3 Z" fill="#c8cce8" opacity="0.9" filter="url(#grain)"/>
<rect x="902.5" y="473.8" width="50.5" height="21.19999999999999" rx="8.1" ry="8.1" stroke="#8890b0" stroke-width="1.5" stroke-dasharray="6 1 3 1" fill="none" opacity="1"/>
<path d="M921.7 476.8 V492 M933.8 476.8 V492 M912.6 476.8 H940.4" stroke="#404860" stroke-width="0.8" stroke-dasharray="2 2" fill="none"/>
<path d="M917.6759999999999 506.5 Q901.5 506 902.5 517.0 Q901.5 528 917.6759999999999 527.5 Q911.6759999999999 517.0 917.6759999999999 506.5 Z" fill="#303848" opacity="0.3" filter="url(#grain)"/>
<rect x="902.5" y="506" width="48.799999999999955" height="22" rx="8.4" ry="8.4" stroke="#606888" stroke-width="1.5" stroke-dasharray="6 1 3 1" fill="none" opacity="1"/>
<path d="M921.0 509 V525 M932.8 509 V525 M912.3 509 H939.1" stroke="#404860" stroke-width="0.8" stroke-dasharray="2 2" fill="none"/>
<path d="M911.526 562.1 Q894 561.6 895 573.0 Q894 584.4 911.526 583.9 Q905.526 573.0 911.526 562.1 Z" fill="#b8bcd8" opacity="0.85" filter="url(#grain)"/>
<rect x="895" y="561.6" width="53.799999999999955" height="22.799999999999955" rx="8.7" ry="8.7" stroke="#8088a8" stroke-width="1.5" stroke-dasharray="6 1 3 1" fill="none" opacity="1"/>
<path d="M915.4 564.6 V581.4 M928.4 564.6 V581.4 M905.8 564.6 H935.3" stroke="#404860" stroke-width="0.8" stroke-dasharray="2 2" fill="none"/>
<path d="M911.901 592.5 Q896.4 592 897.4 602.5 Q896.4 613 911.901 612.5 Q905.901 602.5 911.901 592.5 Z" fill="#903040" opacity="0.85" filter="url(#grain)"/>
<rect x="897.4" y="592" width="46.30000000000007" height="21" rx="8.0" ry="8.0" stroke="#704050" stroke-width="1.5" stroke-dasharray="6 1 3 1" fill="none" opacity="1"/>
<path d="M915.0 595 V610 M926.1 595 V610 M906.7 595 H932.1" stroke="#404860" stroke-width="0.8" stroke-dasharray="2 2" fill="none"/>
<path d="M911.551 644.9 Q894.7 644.4 895.7 656.2 Q894.7 668 911.551 667.5 Q905.551 656.2 911.551 644.9 Z" fill="#d0d4f0" opacity="0.95" filter="url(#grain)"/>
<rect x="895.7" y="644.4" width="51.299999999999955" height="23.600000000000023" rx="9.0" ry="9.0" stroke="#a0a8c8" stroke-width="1.5" stroke-dasharray="6 1 3 1" fill="none" opacity="1"/>
<path d="M915.2 647.4 V665 M927.5 647.4 V665 M906.0 647.4 H934.2" stroke="#404860" stroke-width="0.8" stroke-dasharray="2 2" fill="none"/>
<rect x="896" y="668" width="5" height="7" fill="none" stroke="#d03040" stroke-width="1.3"/>
<path d="M956.8 576.8 V549 H981.2 V564.2 H1020 L1020 584 L1015 586.4 V608 L1020 614.7 H952.6 V601 M957.7 614.7 V677" stroke="#e0dcc8" stroke-width="1.2" fill="none" opacity="1.0"/>
<path d="M1010 550 H1021.6 V553 H1013 L1017 565" stroke="#e0dcc8" stroke-width="1.2" fill="none" opacity="1.0"/>
<path d="M1016 601 L1019 606 L1017 609 Z" fill="#e02020"/>
<path d="M1003 621.3 Q1021 620.8 1020 631.75 Q1021 642.7 1003 642.2 Q1009 631.75 1003 621.3 Z" fill="#c8cce8" opacity="0.9" filter="url(#grain)"/>
<rect x="964.4" y="620.8" width="55.60000000000002" height="21.90000000000009" rx="8.3" ry="8.3" stroke="#a0a8c8" stroke-width="1.5" stroke-dasharray="6 1 3 1" fill="none" opacity="1"/>
<path d="M985.5 623.8 V639.7 M998.9 623.8 V639.7 M975.5 623.8 H1006.1" stroke="#404860" stroke-width="0.8" stroke-dasharray="2 2" fill="none"/>
<path d="M1002.665 650.8 Q1019.3 650.3 1018.3 661.25 Q1019.3 672.2 1002.665 671.7 Q1008.665 661.25 1002.665 650.8 Z" fill="#c8cce8" opacity="0.9" filter="url(#grain)"/>
<rect x="967.8" y="650.3" width="50.5" height="21.90000000000009" rx="8.3" ry="8.3" stroke="#a0a8c8" stroke-width="1.5" stroke-dasharray="6 1 3 1" fill="none" opacity="1"/>
<path d="M987.0 653.3 V669.2 M999.1 653.3 V669.2 M977.9 653.3 H1005.7" stroke="#404860" stroke-width="0.8" stroke-dasharray="2 2" fill="none"/>
<path d="M1109.419 658.5 Q1093 658 1094 668.5 Q1093 679 1109.419 678.5 Q1103.419 668.5 1109.419 658.5 Z" fill="#283878" opacity="0.95" filter="url(#grain)"/>
<rect x="1094" y="658" width="49.700000000000045" height="21" rx="8.0" ry="8.0" stroke="#405088" stroke-width="1.5" stroke-dasharray="6 1 3 1" fill="none" opacity="1"/>
<path d="M1112.9 661 V676 M1124.8 661 V676 M1103.9 661 H1131.3" stroke="#404860" stroke-width="0.8" stroke-dasharray="2 2" fill="none"/>
<path d="M950 741.2 H1005.7 V739.5 H1012.4 V741.7 L1051 742.5 M1058 743.5 L1143.7 745.4" stroke="#b8b8b8" stroke-width="1.1" fill="none" opacity="1.0"/>
<path d="M1143.7 745.4 V736" stroke="#c0c0c0" stroke-width="1.0" fill="none" opacity="1.0"/>
<path d="M1119 758 L1126 748 L1119 745.5" stroke="#5a78d8" stroke-width="1.2" fill="none" opacity="1.0"/>
<path d="M1054.8 740 V695" stroke="#00e000" stroke-width="1.4" fill="none" opacity="1.0"/>
<path d="M1052 705 L1054.8 694 L1057.6 705" stroke="#00e000" stroke-width="1" fill="none" opacity="1.0"/>
<path d="M1058 743.6 H1102" stroke="#f01010" stroke-width="1.6" fill="none" opacity="1.0"/>
<path d="M1092 741 L1104 743.6 L1092 747.5" stroke="#f01010" stroke-width="1" fill="none" opacity="1.0"/>
<rect x="1051" y="740.4" width="7" height="6.4" fill="#fff"/><path d="M1054.5 741.5 V745.8 M1052.3 743.6 H1056.7" stroke="#0030ff" stroke-width="1.1"/>
<path d="M745.3 750.5 L902.2 737.6" stroke="#c8c8e0" stroke-width="1.2" fill="none" opacity="1.0"/>
<path d="M929.5 738.3 H949.2 L960 741.4" stroke="#d0c0d0" stroke-width="1.2" fill="none" opacity="1.0"/>
<path d="M575.2 831.6 L623 827 M626 826.5 L740 817.6 L893.1 804.3 L948.5 799" stroke="#a8b0d8" stroke-width="1.3" fill="none" opacity="1.0"/>
<path d="M949.2 737.6 V799" stroke="#c8c8c8" stroke-width="1.0" fill="none" opacity="1.0"/>
<path d="M749.1 757.3 L755.2 814.2 M803.7 752.7 L810.5 808.8 M833.2 742.1 L839.3 807.3 M891.6 739 L894.7 802.8 M888.7 754 L896 741 L902 738" stroke="#b8bcc8" stroke-width="1.2" fill="none" opacity="1.0"/>
<path d="M618.4 774 L697.2 759.6" stroke="#c898b0" stroke-width="1.2" fill="none" opacity="1.0"/>
<path d="M700 759 h2 M705 757.5 h2 M709 756.7 h1.5" stroke="#c8c8c8" stroke-width="1.0" fill="none" opacity="1.0"/>
<path d="M732.9 752 L745 750" stroke="#c8c8d0" stroke-width="1.2" fill="none" opacity="1.0"/>
<path d="M572.9 771 V805.8 M588 805 V813 L592.6 815 V821" stroke="#a0a8d0" stroke-width="1.2" fill="none" opacity="1.0"/>
<path d="M621 771 L625 775 M630 775 V779 M695 760 V768" stroke="#c8a0b0" stroke-width="1.0" fill="none" opacity="1.0"/>
<path d="M699.5 803 L706 806 M704 801.3 H718.4 V816.4 M706 809 V813 H716" stroke="#b8b8c8" stroke-width="1.1" fill="none" opacity="1.0"/>
<rect x="777" y="766" width="2" height="2" fill="#8a6a88"/>
<rect x="792" y="766" width="2" height="2" fill="#8a6a88"/>
<rect x="779" y="778" width="2" height="2" fill="#8a6a88"/>
<rect x="793" y="778" width="2" height="2" fill="#8a6a88"/>
<rect x="769" y="791" width="2" height="2" fill="#8a6a88"/>
<rect x="778" y="791" width="2" height="2" fill="#8a6a88"/>
<rect x="792" y="790" width="2" height="2" fill="#8a6a88"/>
<rect x="770" y="805" width="2" height="2" fill="#8a6a88"/>
<rect x="782" y="805" width="2" height="2" fill="#8a6a88"/>
<rect x="795" y="805" width="2" height="2" fill="#8a6a88"/>
<rect x="821" y="758" width="2" height="2" fill="#8a6a88"/>
<rect x="822" y="772" width="2" height="2" fill="#8a6a88"/>
<rect x="822" y="784" width="2" height="2" fill="#8a6a88"/>
<rect x="822" y="795" width="2" height="2" fill="#8a6a88"/>
<rect x="847" y="757" width="2" height="2" fill="#8a6a88"/>
<rect x="863" y="756" width="2" height="2" fill="#8a6a88"/>
<rect x="873" y="757" width="2" height="2" fill="#8a6a88"/>
<rect x="848" y="766" width="2" height="2" fill="#8a6a88"/>
<rect x="864" y="766" width="2" height="2" fill="#8a6a88"/>
<rect x="875" y="766" width="2" height="2" fill="#8a6a88"/>
<rect x="851" y="776" width="2" height="2" fill="#8a6a88"/>
<rect x="865" y="776" width="2" height="2" fill="#8a6a88"/>
<rect x="877" y="776" width="2" height="2" fill="#8a6a88"/>
<rect x="851" y="788" width="2" height="2" fill="#8a6a88"/>
<rect x="865" y="788" width="2" height="2" fill="#8a6a88"/>
<rect x="879" y="788" width="2" height="2" fill="#8a6a88"/>
<rect x="852" y="802" width="2" height="2" fill="#8a6a88"/>
<rect x="866" y="800" width="2" height="2" fill="#8a6a88"/>
<rect x="881" y="800" width="2" height="2" fill="#8a6a88"/>
<path d="M490 303.6 L504.4 288.5" stroke="#b8b8e0" stroke-width="1.4" fill="none" opacity="1.0"/>
<path d="M445.4 301 V313.7" stroke="#c0c0d0" stroke-width="1.0" fill="none" opacity="1.0"/>
<path d="M454 302.4 h2" stroke="#c0c0d0" stroke-width="1.0" fill="none" opacity="1.0"/>
<path d="M477 305 h1.5" stroke="#c0c0d0" stroke-width="1.0" fill="none" opacity="1.0"/>
<path d="M383.5 309.5 v2" stroke="#c0c0d0" stroke-width="1.0" fill="none" opacity="1.0"/>
<path d="M441 360.5 h1.5" stroke="#c0c0d0" stroke-width="1.0" fill="none" opacity="1.0"/>
<path d="M503.4 364 V372" stroke="#c0c0d0" stroke-width="1.0" fill="none" opacity="1.0"/>
<path d="M637.3 294.8 V308.7 L636 309" stroke="#c0c0d0" stroke-width="1.0" fill="none" opacity="1.0"/>
<path d="M653 263.7 h7" stroke="#c0c0d0" stroke-width="1.0" fill="none" opacity="1.0"/>
<path d="M498 616 V623 M497.5 630 V640" stroke="#c0c0d0" stroke-width="1.0" fill="none" opacity="1.0"/>
<path d="M577 645 V648 M614 646.7 h2 M630 645 V650 H633 V645" stroke="#c0c0d0" stroke-width="1.0" fill="none" opacity="1.0"/>
<path d="M705 688.8 h5" stroke="#c0c0d0" stroke-width="1.0" fill="none" opacity="1.0"/>
<path d="M498 702 V712" stroke="#c0c0d0" stroke-width="1.0" fill="none" opacity="1.0"/>
<path d="M576.5 709 V712 M630.4 709 Q633 711 630.4 714" stroke="#c0c0d0" stroke-width="1.0" fill="none" opacity="1.0"/>
<path d="M441 766 V776 M446 768 V776" stroke="#c0c0d0" stroke-width="1.0" fill="none" opacity="1.0"/>
<path d="M494.7 769.6 V776" stroke="#c0c0d0" stroke-width="1.0" fill="none" opacity="1.0"/>
<path d="M572 769 V780 M582 776 V780" stroke="#c0c0d0" stroke-width="1.0" fill="none" opacity="1.0"/>
<path d="M497 492.5 h1" stroke="#c0c0d0" stroke-width="1.0" fill="none" opacity="1.0"/>
<path d="M441 710 h1" stroke="#c0c0d0" stroke-width="1.0" fill="none" opacity="1.0"/>
<path d="M327 308.5 h1.5" stroke="#c0c0d0" stroke-width="1.0" fill="none" opacity="1.0"/>
<rect x="1047.0" y="225.6" width="2" height="3" fill="#c0c8e8" opacity="0.85"/>
<rect x="999.1" y="230.1" width="3" height="3" fill="#c0c8e8" opacity="0.85"/>
<rect x="982.8" y="232.5" width="1" height="5" fill="#a8b4e0" opacity="0.85"/>
<rect x="1138.7" y="234.4" width="3" height="1" fill="#d8dcf0" opacity="0.85"/>
<rect x="1114.9" y="233.9" width="1" height="5" fill="#d8dcf0" opacity="0.85"/>
<rect x="1105.3" y="233.4" width="1.5" height="3" fill="#c0c8e8" opacity="0.85"/>
<rect x="1058.9" y="230.4" width="1" height="3" fill="#e8e8f0" opacity="0.85"/>
<rect x="1038.8" y="229.8" width="3" height="1" fill="#e8e8f0" opacity="0.85"/>
<rect x="1022.4" y="233.4" width="1" height="5" fill="#d8dcf0" opacity="0.85"/>
<rect x="1037.7" y="235.9" width="1.5" height="3" fill="#d8dcf0" opacity="0.85"/>
<rect x="1137.5" y="233.1" width="1" height="1" fill="#a8b4e0" opacity="0.85"/>
<rect x="1033.2" y="232.9" width="2" height="3" fill="#d8dcf0" opacity="0.85"/>
<rect x="1067.4" y="234.7" width="1.5" height="1" fill="#e8e8f0" opacity="0.85"/>
<rect x="1025.5" y="238.0" width="2" height="1" fill="#c0c8e8" opacity="0.85"/>
<rect x="1010.1" y="234.0" width="2" height="1" fill="#c0c8e8" opacity="0.85"/>
<rect x="1046.1" y="233.7" width="1" height="1" fill="#a8b4e0" opacity="0.85"/>
<rect x="1081.2" y="235.7" width="1" height="1" fill="#e8e8f0" opacity="0.85"/>
<rect x="1120.7" y="235.4" width="3" height="2" fill="#d8dcf0" opacity="0.85"/>
<rect x="1003.7" y="227.6" width="3" height="1" fill="#d8dcf0" opacity="0.85"/>
<rect x="1143.1" y="237.2" width="1" height="3" fill="#e8e8f0" opacity="0.85"/>
<rect x="967.7" y="227.9" width="2" height="1" fill="#d8dcf0" opacity="0.85"/>
<rect x="982.1" y="228.8" width="3" height="1" fill="#d8dcf0" opacity="0.85"/>
<rect x="1073.6" y="230.3" width="3" height="3" fill="#c0c8e8" opacity="0.85"/>
<rect x="1121.1" y="235.8" width="1" height="1" fill="#e8e8f0" opacity="0.85"/>
<rect x="1128.6" y="234.1" width="1" height="1" fill="#c0c8e8" opacity="0.85"/>
<rect x="1089.0" y="230.6" width="2" height="3" fill="#d8dcf0" opacity="0.85"/>
<rect x="1041.4" y="233.8" width="1.5" height="1" fill="#a8b4e0" opacity="0.85"/>
<rect x="1012.0" y="233.6" width="3" height="3" fill="#e8e8f0" opacity="0.85"/>
<rect x="1059.1" y="241.7" width="1" height="1" fill="#a8b4e0" opacity="0.85"/>
<rect x="1066.1" y="228.9" width="3" height="5" fill="#d8dcf0" opacity="0.85"/>
<rect x="1016.2" y="235.1" width="1" height="1" fill="#e8e8f0" opacity="0.85"/>
<rect x="1039.6" y="231.8" width="1" height="1" fill="#d8dcf0" opacity="0.85"/>
<rect x="997.5" y="229.9" width="1" height="1" fill="#e8e8f0" opacity="0.85"/>
<rect x="990.8" y="236.3" width="2" height="2" fill="#c0c8e8" opacity="0.85"/>
<rect x="1071.6" y="236.5" width="1.5" height="2" fill="#d8dcf0" opacity="0.85"/>
<rect x="969.8" y="231.2" width="1" height="3" fill="#d8dcf0" opacity="0.85"/>
<rect x="1096.8" y="227.4" width="1" height="3" fill="#e8e8f0" opacity="0.85"/>
<rect x="1097.9" y="245.2" width="1" height="2" fill="#e8e8f0" opacity="0.85"/>
<rect x="981.2" y="231.6" width="2" height="1" fill="#a8b4e0" opacity="0.85"/>
<rect x="1068.5" y="233.2" width="3" height="3" fill="#a8b4e0" opacity="0.85"/>
<rect x="1070.3" y="231.9" width="1" height="2" fill="#a8b4e0" opacity="0.85"/>
<rect x="1096.3" y="232.1" width="2" height="5" fill="#a8b4e0" opacity="0.85"/>
<rect x="1044.9" y="233.8" width="3" height="1" fill="#e8e8f0" opacity="0.85"/>
<rect x="1073.6" y="231.8" width="2" height="1" fill="#c0c8e8" opacity="0.85"/>
<rect x="1137.4" y="237.6" width="2" height="2" fill="#d8dcf0" opacity="0.85"/>
<rect x="1031.9" y="237.0" width="1" height="5" fill="#c0c8e8" opacity="0.85"/>
<rect x="1058.8" y="233.1" width="2" height="3" fill="#c0c8e8" opacity="0.85"/>
<rect x="1024.5" y="229.8" width="1.5" height="1" fill="#a8b4e0" opacity="0.85"/>
<rect x="1109.9" y="233.1" width="1" height="3" fill="#c0c8e8" opacity="0.85"/>
<rect x="1070.4" y="230.7" width="1.5" height="1" fill="#c0c8e8" opacity="0.85"/>
<rect x="990.1" y="228.6" width="1" height="1" fill="#e8e8f0" opacity="0.85"/>
<rect x="1113.1" y="239.0" width="1" height="3" fill="#a8b4e0" opacity="0.85"/>
<rect x="1015.3" y="233.8" width="3" height="3" fill="#e8e8f0" opacity="0.85"/>
<rect x="1094.2" y="236.5" width="3" height="3" fill="#e8e8f0" opacity="0.85"/>
<rect x="979.4" y="240.0" width="1" height="2" fill="#e8e8f0" opacity="0.85"/>
<rect x="1021.3" y="234.4" width="3" height="1" fill="#c0c8e8" opacity="0.85"/>
<rect x="1038.5" y="235.2" width="1.5" height="1" fill="#c0c8e8" opacity="0.85"/>
<rect x="1108.6" y="238.6" width="1" height="3" fill="#d8dcf0" opacity="0.85"/>
<rect x="1078.8" y="229.4" width="1" height="1" fill="#c0c8e8" opacity="0.85"/>
<rect x="1113.5" y="227.7" width="1.5" height="1" fill="#d8dcf0" opacity="0.85"/>
<rect x="1101.2" y="232.1" width="1" height="2" fill="#e8e8f0" opacity="0.85"/>
<rect x="1062.6" y="232.8" width="3" height="5" fill="#c0c8e8" opacity="0.85"/>
<rect x="1036.4" y="235.0" width="1" height="3" fill="#a8b4e0" opacity="0.85"/>
<rect x="989.3" y="225.6" width="2" height="1" fill="#d8dcf0" opacity="0.85"/>
<rect x="1033.4" y="226.5" width="1.5" height="3" fill="#e8e8f0" opacity="0.85"/>
<rect x="1082.6" y="230.0" width="1" height="1" fill="#d8dcf0" opacity="0.85"/>
<rect x="1004.2" y="240.9" width="1.5" height="5" fill="#e8e8f0" opacity="0.85"/>
<rect x="1012.9" y="227.2" width="1" height="2" fill="#d8dcf0" opacity="0.85"/>
<rect x="972.6" y="231.0" width="1.5" height="3" fill="#d8dcf0" opacity="0.85"/>
<rect x="1005.1" y="236.1" width="1" height="3" fill="#d8dcf0" opacity="0.85"/>
<rect x="994.4" y="282.3" width="1" height="4" fill="#c0c8e8" opacity="0.8"/>
<rect x="1130.0" y="289.5" width="2" height="4" fill="#d8dcf0" opacity="0.8"/>
<rect x="1058.1" y="286.8" width="1.5" height="3" fill="#a8b4e0" opacity="0.8"/>
<rect x="1122.6" y="288.1" width="1" height="3" fill="#c0c8e8" opacity="0.8"/>
<rect x="1124.8" y="281.1" width="1" height="4" fill="#d8dcf0" opacity="0.8"/>
<rect x="1048.5" y="284.4" width="2" height="1" fill="#d8dcf0" opacity="0.8"/>
<rect x="1050.6" y="280.6" width="1" height="4" fill="#d8dcf0" opacity="0.8"/>
<rect x="976.8" y="282.0" width="2" height="3" fill="#c0c8e8" opacity="0.8"/>
<rect x="1043.6" y="284.3" width="1" height="3" fill="#a8b4e0" opacity="0.8"/>
<rect x="1113.7" y="291.2" width="1.5" height="1" fill="#c0c8e8" opacity="0.8"/>
<rect x="970.8" y="284.7" width="1" height="1" fill="#c0c8e8" opacity="0.8"/>
<rect x="991.5" y="289.7" width="1" height="3" fill="#e8e8f0" opacity="0.8"/>
<rect x="1047.9" y="288.5" width="1" height="3" fill="#c0c8e8" opacity="0.8"/>
<rect x="1069.8" y="284.6" width="1" height="2" fill="#c0c8e8" opacity="0.8"/>
<rect x="1052.9" y="287.5" width="1" height="2" fill="#e8e8f0" opacity="0.8"/>
<rect x="1114.0" y="281.7" width="1.5" height="3" fill="#c0c8e8" opacity="0.8"/>
<rect x="1001.8" y="291.3" width="1" height="2" fill="#c0c8e8" opacity="0.8"/>
<rect x="1008.6" y="289.6" width="2" height="2" fill="#c0c8e8" opacity="0.8"/>
<rect x="1115.5" y="286.5" width="1.5" height="2" fill="#d8dcf0" opacity="0.8"/>
<rect x="1045.1" y="284.7" width="1" height="1" fill="#a8b4e0" opacity="0.8"/>
<rect x="990.0" y="285.8" width="1" height="3" fill="#d8dcf0" opacity="0.8"/>
<rect x="1061.1" y="286.9" width="1" height="4" fill="#d8dcf0" opacity="0.8"/>
<rect x="1050.5" y="288.0" width="2" height="2" fill="#e8e8f0" opacity="0.8"/>
<rect x="968.2" y="283.2" width="1" height="4" fill="#a8b4e0" opacity="0.8"/>
<rect x="1025.0" y="279.5" width="1.5" height="4" fill="#c0c8e8" opacity="0.8"/>
<rect x="1065.2" y="289.4" width="1.5" height="1" fill="#a8b4e0" opacity="0.8"/>
<rect x="1059.4" y="288.0" width="1" height="3" fill="#e8e8f0" opacity="0.8"/>
<rect x="1011.8" y="288.7" width="1" height="4" fill="#c0c8e8" opacity="0.8"/>
<rect x="1113.0" y="288.3" width="1.5" height="4" fill="#c0c8e8" opacity="0.8"/>
<rect x="1038.9" y="218.0" width="1.5" height="1.5" fill="#e0e4f8"/>
<rect x="974.5" y="216.1" width="1.5" height="1.5" fill="#e0e4f8"/>
<rect x="1051.0" y="216.5" width="1.5" height="1.5" fill="#e0e4f8"/>
<rect x="1029.3" y="217.7" width="1.5" height="1.5" fill="#e0e4f8"/>
<rect x="1080.8" y="217.6" width="1.5" height="1.5" fill="#e0e4f8"/>
<rect x="1142.4" y="219.6" width="1.5" height="1.5" fill="#e0e4f8"/>
<rect x="1025.9" y="217.7" width="1.5" height="1.5" fill="#e0e4f8"/>
<rect x="1070.4" y="218.1" width="1.5" height="1.5" fill="#e0e4f8"/>
<rect x="1035.8" y="218.7" width="1.5" height="1.5" fill="#e0e4f8"/>
<rect x="1084.3" y="218.7" width="1.5" height="1.5" fill="#e0e4f8"/>
<rect x="1107.3" y="219.8" width="1.5" height="1.5" fill="#e0e4f8"/>
<rect x="965.4" y="216.6" width="1.5" height="1.5" fill="#e0e4f8"/>
<rect x="1102.8" y="218.0" width="1.5" height="1.5" fill="#e0e4f8"/>
<rect x="1038.1" y="216.4" width="1.5" height="1.5" fill="#e0e4f8"/>
<rect x="998.5" y="216.6" width="1.5" height="1.5" fill="#e0e4f8"/>
<rect x="979.9" y="216.0" width="1.5" height="1.5" fill="#e0e4f8"/>
<rect x="1134.9" y="219.2" width="1.5" height="1.5" fill="#e0e4f8"/>
<rect x="1058.5" y="219.0" width="1.5" height="1.5" fill="#e0e4f8"/>
<rect x="1070.1" y="219.2" width="1.5" height="1.5" fill="#e0e4f8"/>
<rect x="1083.5" y="219.0" width="1.5" height="1.5" fill="#e0e4f8"/>
<rect x="975.6" y="216.7" width="1.5" height="1.5" fill="#e0e4f8"/>
<rect x="1106.8" y="217.5" width="1.5" height="1.5" fill="#e0e4f8"/>
<rect x="1139.6" y="218.3" width="1.5" height="1.5" fill="#e0e4f8"/>
<rect x="1051.6" y="216.9" width="1.5" height="1.5" fill="#e0e4f8"/>
<rect x="1056.1" y="218.1" width="1.5" height="1.5" fill="#e0e4f8"/>
<rect x="972.2" y="217.5" width="1.5" height="1.5" fill="#e0e4f8"/>
<rect x="1041.8" y="217.6" width="1.5" height="1.5" fill="#e0e4f8"/>
<rect x="1075.8" y="217.8" width="1.5" height="1.5" fill="#e0e4f8"/>
<rect x="1015.9" y="217.5" width="1.5" height="1.5" fill="#e0e4f8"/>
<rect x="1068.6" y="217.5" width="1.5" height="1.5" fill="#e0e4f8"/>
<rect x="1098.6" y="218.0" width="1.5" height="1.5" fill="#e0e4f8"/>
<rect x="963.7" y="215.7" width="1.5" height="1.5" fill="#e0e4f8"/>
<rect x="969.2" y="215.6" width="1.5" height="1.5" fill="#e0e4f8"/>
<rect x="1105.9" y="218.3" width="1.5" height="1.5" fill="#e0e4f8"/>
<rect x="1133.3" y="219.6" width="1.5" height="1.5" fill="#e0e4f8"/>
<rect x="970.6" y="217.6" width="1.5" height="1.5" fill="#e0e4f8"/>
<rect x="1142.3" y="218.2" width="1.5" height="1.5" fill="#e0e4f8"/>
<rect x="1134.9" y="218.9" width="1.5" height="1.5" fill="#e0e4f8"/>
<rect x="1052.7" y="218.9" width="1.5" height="1.5" fill="#e0e4f8"/>
<rect x="1007.8" y="217.1" width="1.5" height="1.5" fill="#e0e4f8"/>
<rect x="1141.0" y="219.7" width="1.5" height="1.5" fill="#e0e4f8"/>
<rect x="1050.9" y="218.9" width="1.5" height="1.5" fill="#e0e4f8"/>
<rect x="1117.8" y="219.0" width="1.5" height="1.5" fill="#e0e4f8"/>
<rect x="983.1" y="216.9" width="1.5" height="1.5" fill="#e0e4f8"/>
<rect x="1048.5" y="217.0" width="1.5" height="1.5" fill="#e0e4f8"/>
<rect x="971.0" y="216.5" width="1.5" height="1.5" fill="#e0e4f8"/>
<rect x="984.9" y="216.5" width="1.5" height="1.5" fill="#e0e4f8"/>
<rect x="1089.2" y="218.2" width="1.5" height="1.5" fill="#e0e4f8"/>
<rect x="1011.3" y="217.3" width="1.5" height="1.5" fill="#e0e4f8"/>
<rect x="1041.6" y="218.2" width="1.5" height="1.5" fill="#e0e4f8"/>
<rect x="1062.9" y="306.3" width="1.5" height="1.5" fill="#d8dcf0"/>
<rect x="1143.9" y="306.6" width="1.5" height="1.5" fill="#d8dcf0"/>
<rect x="1006.8" y="302.9" width="1.5" height="1.5" fill="#d8dcf0"/>
<rect x="1132.4" y="306.6" width="1.5" height="1.5" fill="#d8dcf0"/>
<rect x="1081.0" y="304.6" width="1.5" height="1.5" fill="#d8dcf0"/>
<rect x="1013.1" y="304.7" width="1.5" height="1.5" fill="#d8dcf0"/>
<rect x="1069.5" y="305.2" width="1.5" height="1.5" fill="#d8dcf0"/>
<rect x="1082.6" y="305.8" width="1.5" height="1.5" fill="#d8dcf0"/>
<rect x="997.4" y="303.2" width="1.5" height="1.5" fill="#d8dcf0"/>
<rect x="1149.1" y="307.2" width="1.5" height="1.5" fill="#d8dcf0"/>
<rect x="1129.7" y="304.3" width="1.5" height="1.5" fill="#d8dcf0"/>
<rect x="972.7" y="303.0" width="1.5" height="1.5" fill="#d8dcf0"/>
<rect x="1042.6" y="304.9" width="1.5" height="1.5" fill="#d8dcf0"/>
<rect x="980.7" y="303.9" width="1.5" height="1.5" fill="#d8dcf0"/>
<rect x="974.9" y="302.4" width="1.5" height="1.5" fill="#d8dcf0"/>
<rect x="1090.8" y="305.3" width="1.5" height="1.5" fill="#d8dcf0"/>
<rect x="1082.2" y="304.7" width="1.5" height="1.5" fill="#d8dcf0"/>
<rect x="1052.9" y="303.8" width="1.5" height="1.5" fill="#d8dcf0"/>
<rect x="1027.0" y="305.1" width="1.5" height="1.5" fill="#d8dcf0"/>
<rect x="1122.0" y="304.3" width="1.5" height="1.5" fill="#d8dcf0"/>
<rect x="984.0" y="304.7" width="1.5" height="1.5" fill="#d8dcf0"/>
<rect x="1080.8" y="305.9" width="1.5" height="1.5" fill="#d8dcf0"/>
<rect x="1001.9" y="303.8" width="1.5" height="1.5" fill="#d8dcf0"/>
<rect x="1010.5" y="305.1" width="1.5" height="1.5" fill="#d8dcf0"/>
<rect x="1031.8" y="304.9" width="1.5" height="1.5" fill="#d8dcf0"/>
<rect x="1150.9" y="305.4" width="1.5" height="1.5" fill="#d8dcf0"/>
<rect x="1066.3" y="305.6" width="1.5" height="1.5" fill="#d8dcf0"/>
<rect x="1137.8" y="305.6" width="1.5" height="1.5" fill="#d8dcf0"/>
<rect x="1031.9" y="303.2" width="1.5" height="1.5" fill="#d8dcf0"/>
<rect x="1129.0" y="304.4" width="1.5" height="1.5" fill="#d8dcf0"/>
<rect x="976.9" y="303.9" width="1.5" height="1.5" fill="#d8dcf0"/>
<rect x="1054.1" y="305.3" width="1.5" height="1.5" fill="#d8dcf0"/>
<rect x="1018.4" y="305.1" width="1.5" height="1.5" fill="#d8dcf0"/>
<rect x="975.6" y="302.8" width="1.5" height="1.5" fill="#d8dcf0"/>
<rect x="1088.1" y="303.9" width="1.5" height="1.5" fill="#d8dcf0"/>
<rect x="1019.3" y="304.9" width="1.5" height="1.5" fill="#d8dcf0"/>
<rect x="1094.2" y="304.6" width="1.5" height="1.5" fill="#d8dcf0"/>
<rect x="988.4" y="303.4" width="1.5" height="1.5" fill="#d8dcf0"/>
<rect x="1100.4" y="304.9" width="1.5" height="1.5" fill="#d8dcf0"/>
<rect x="983.5" y="304.4" width="1.5" height="1.5" fill="#d8dcf0"/>
</svg>
</body></html>
